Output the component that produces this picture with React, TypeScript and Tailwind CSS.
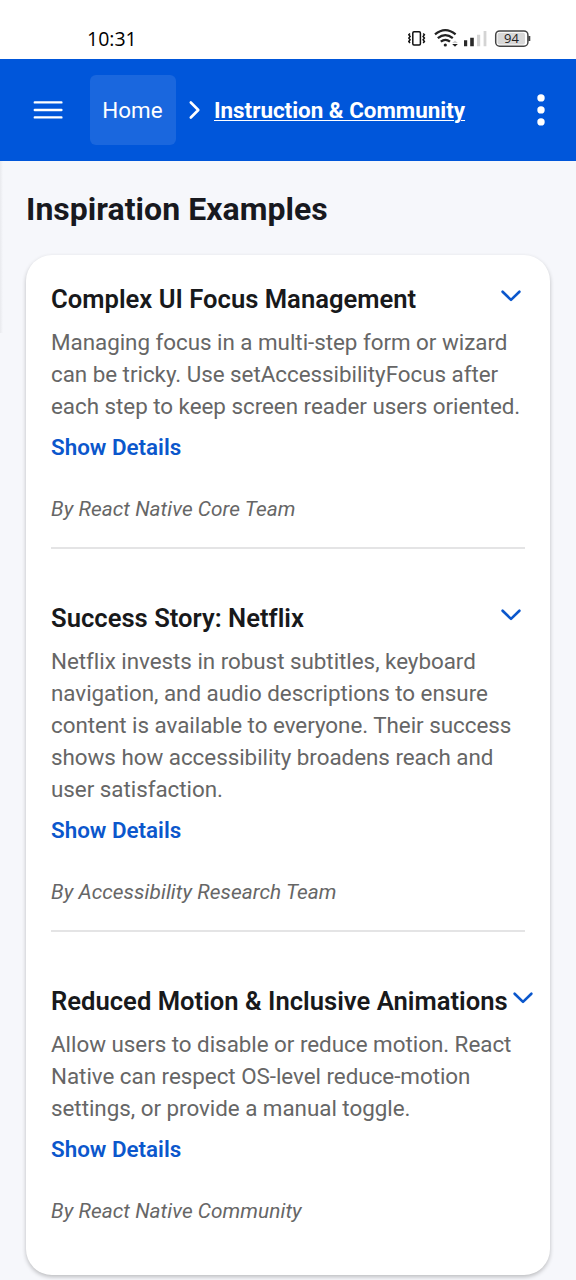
import React from "react";

type Example = { title: string; lines: string[]; author: string; wide?: boolean };

const examples: Example[] = [
  {
    title: "Complex UI Focus Management",
    lines: [
      "Managing focus in a multi-step form or wizard",
      "can be tricky. Use setAccessibilityFocus after",
      "each step to keep screen reader users oriented.",
    ],
    author: "By React Native Core Team",
  },
  {
    title: "Success Story: Netflix",
    lines: [
      "Netflix invests in robust subtitles, keyboard",
      "navigation, and audio descriptions to ensure",
      "content is available to everyone. Their success",
      "shows how accessibility broadens reach and",
      "user satisfaction.",
    ],
    author: "By Accessibility Research Team",
  },
  {
    title: "Reduced Motion & Inclusive Animations",
    lines: [
      "Allow users to disable or reduce motion. React",
      "Native can respect OS-level reduce-motion",
      "settings, or provide a manual toggle.",
    ],
    author: "By React Native Community",
    wide: true,
  },
];

function StatusBar() {
  return (
    <div className="flex h-[59px] items-start justify-between bg-white pl-[87px] pr-[45px] pt-[28px]">
      <span className="font-['Open_Sans','Noto_Sans',sans-serif] text-[19.500px] font-medium leading-[22px] text-black">10:31</span>
      <svg width="123" height="20" viewBox="0 0 123 20" fill="none">
        <rect x="4.8" y="3.8" width="7.6" height="13.2" rx="1.2" stroke="#111" strokeWidth="1.5" />
        <path d="M2 5.5l-1.2 1.3 1.3 1.6-1.3 1.7 1.3 1.7-1.3 1.7 1.2 1.5M15.200 5.5l1.2 1.3-1.3 1.6 1.3 1.7-1.3 1.7 1.3 1.7-1.2 1.5" stroke="#111" strokeWidth="1.5" />
        <g stroke="#222" strokeWidth="2.300">
          <path d="M27 6.4q10.300-8.500 20.600 0" />
          <path d="M29.800 10.200q7.500-6.100 15 0" />
          <path d="M32.800 13.700q4.600-3.700 9.200 0" />
        </g>
        <circle cx="37.300" cy="17" r="1.600" fill="#222" />
        <path d="M44.200 16h5.600l-2.800 2.800z" fill="#222" />
        <path d="M44.200 15h5.600l-2.800-2.600z" fill="#ccc" />
        <path d="M56 12.200h3.200v6H56zM62.200 9.800h3.600v8.400h-3.600z" fill="#292929" />
        <path d="M69 6.800h3.200v11.400H69zM75.600 3h2.800v15.200h-2.800z" fill="#d4d4d4" />
        <rect x="87.700" y="2.900" width="32.200" height="15.300" rx="4" stroke="#444" strokeWidth="1.500" />
        <rect x="89.500" y="4.700" width="27.500" height="11.700" rx="2" fill="#d8d8d8" />
        <path d="M121.300 8v5" stroke="#444" strokeWidth="2" />
        <text x="103.500" y="15.200" textAnchor="middle" fontFamily="Open Sans, sans-serif" fontSize="13" fontWeight="500" fill="#222">94</text>
      </svg>
    </div>
  );
}

function Header() {
  return (
    <header className="flex h-[102px] items-center bg-[#0056da] text-white">
      <svg className="ml-[33px] shrink-0" width="30" height="20" viewBox="0 0 30 20" stroke="white" strokeWidth="2.400" strokeLinecap="round">
        <path d="M1.800 2.400h26.600M1.800 10h26.600M1.800 17.400h26.600" />
      </svg>
      <div className="ml-[27px] flex h-[70px] w-[86px] shrink-0 items-center justify-center rounded-[6px] bg-[#1a67de]">
        <span className="pr-px text-[22.400px] leading-8 tracking-[0.100px]">Home</span>
      </div>
      <svg className="ml-[12px] shrink-0" width="14" height="20" viewBox="0 0 14 20" fill="none" stroke="white" strokeWidth="2.600" strokeLinecap="round" strokeLinejoin="round">
        <path d="M2.800 2.500l7.500 7.500-7.500 7.500" />
      </svg>
      <span className="ml-[12px] whitespace-nowrap text-[22.400px] font-bold leading-8 underline decoration-1 underline-offset-[2px]">Instruction &amp; Community</span>
      <svg className="ml-auto mr-[30px] shrink-0" width="10" height="32" viewBox="0 0 10 32" fill="white">
        <circle cx="5" cy="3.900" r="3.700" />
        <circle cx="5" cy="15.900" r="3.700" />
        <circle cx="5" cy="27.900" r="3.700" />
      </svg>
    </header>
  );
}

function ExampleItem({ item, last }: { item: Example; last: boolean }) {
  return (
    <article className="flex flex-col">
      <div className={item.wide ? "-mr-[8.500px] flex h-[38px] items-center justify-between" : "mr-[3.500px] flex h-[38px] items-center justify-between"}>
        <h2 className="whitespace-nowrap text-[25.600px] font-semibold leading-[38px] tracking-[0.010px] text-[#18191b]">{item.title}</h2>
        <svg className="mb-[6px] shrink-0" width="22" height="14" viewBox="0 0 22 14" fill="none" stroke="#0b57cc" strokeWidth="2.600" strokeLinecap="round" strokeLinejoin="round">
          <path d="M2.600 2.700l8.400 8.200 8.400-8.200" />
        </svg>
      </div>
      <p className="mt-[8px] whitespace-nowrap text-[22.400px] leading-8 tracking-[-0.030px] text-[#666]">
        {item.lines.map((line) => (
          <span key={line} className="block">{line}</span>
        ))}
      </p>
      <button className="mt-[9px] self-start text-[22.400px] font-semibold leading-8 text-[#0b57cc]">Show Details</button>
      <p className="mt-[30px] text-[20.800px] italic leading-[33px] tracking-[0.060px] text-[#666]">{item.author}</p>
      {!last && <div className="mb-[50px] mt-[21px] h-[2px] bg-[#e4e4e5]" />}
    </article>
  );
}

export default function App() {
  return (
    <div className="h-[1280px] w-[576px] overflow-hidden bg-[#f6f7fb] font-['Roboto',sans-serif]">
      <StatusBar />
      <Header />
      <main className="relative px-[26px] pt-[29px]">
        <div className="absolute left-0 top-0 h-[172px] w-[3px] bg-linear-to-r from-[#e9eaee] to-[#f6f7fb]" />
        <h1 className="h-[38px] text-[32px] font-bold leading-[38px] tracking-[0.030px] text-[#18191f]">Inspiration Examples</h1>
        <section className="mt-[27px] h-[1020px] rounded-[26px] bg-white px-[25px] pt-[25px] shadow-[0_2px_4px_rgba(0,0,0,0.24)]">
          {examples.map((item, i) => (
            <ExampleItem key={item.title} item={item} last={i === examples.length - 1} />
          ))}
        </section>
      </main>
    </div>
  );
}
